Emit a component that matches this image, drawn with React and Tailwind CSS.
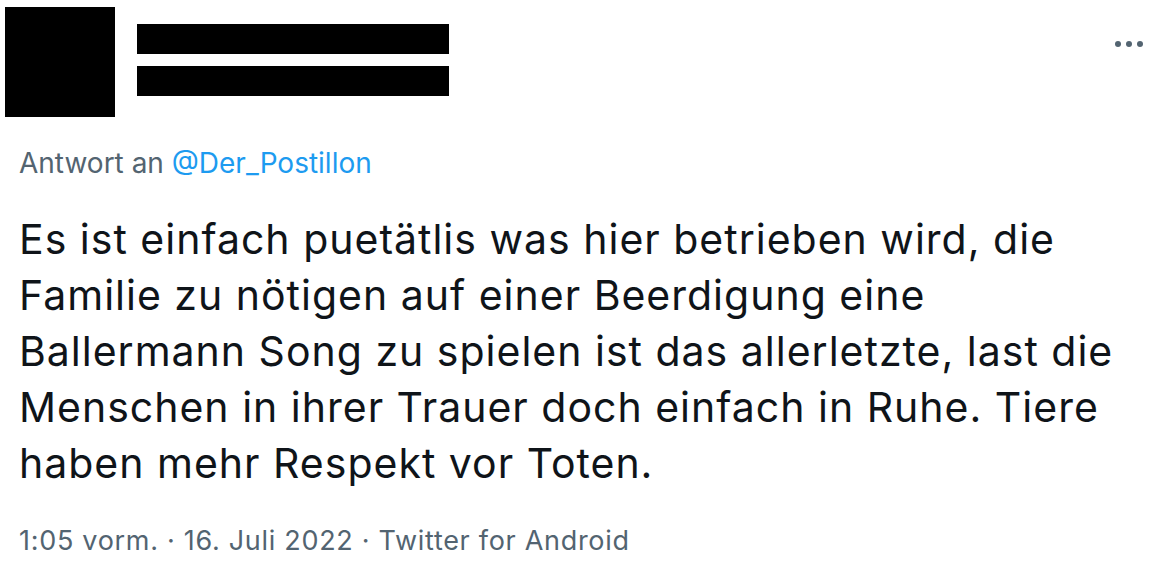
export default function App() {
  return (
    <div className="w-[1172px] h-[570px] bg-white overflow-hidden font-['Inter',sans-serif]">
      <div className="flex items-start">
        <div className="ml-[5px] mt-[7px] w-[110px] h-[110px] bg-black" />
        <div className="ml-[22px] mt-[24px] flex flex-col gap-[12px]">
          <div className="w-[312px] h-[30px] bg-black" />
          <div className="w-[312px] h-[30px] bg-black" />
        </div>
        <div className="ml-auto mr-[29px] mt-[41px] flex gap-[5px]">
          <span className="w-[6px] h-[6px] rounded-full bg-[#536471]" />
          <span className="w-[6px] h-[6px] rounded-full bg-[#536471]" />
          <span className="w-[6px] h-[6px] rounded-full bg-[#536471]" />
        </div>
      </div>
      <div className="pl-[19px] pr-[10px]">
        <p className="mt-[29px] text-[28px] leading-[34px] text-[#536471]">
          Antwort an <span className="text-[#1d9bf0]">@Der_Postillon</span>
        </p>
        <p className="mt-[31px] text-[41px] leading-[56px] tracking-[1px] text-[#0f1419]">
          Es ist einfach puetätlis was hier betrieben wird, die
          <br />
          Familie zu nötigen auf einer Beerdigung eine
          <br />
          Ballermann Song zu spielen ist das allerletzte, last die
          <br />
          Menschen in ihrer Trauer doch einfach in Ruhe. Tiere
          <br />
          haben mehr Respekt vor Toten.
        </p>
        <p className="mt-[33px] text-[27px] leading-[34px] tracking-[0.7px] text-[#536471]">
          1:05 vorm. · 16. Juli 2022 · Twitter for Android
        </p>
      </div>
    </div>
  );
}
